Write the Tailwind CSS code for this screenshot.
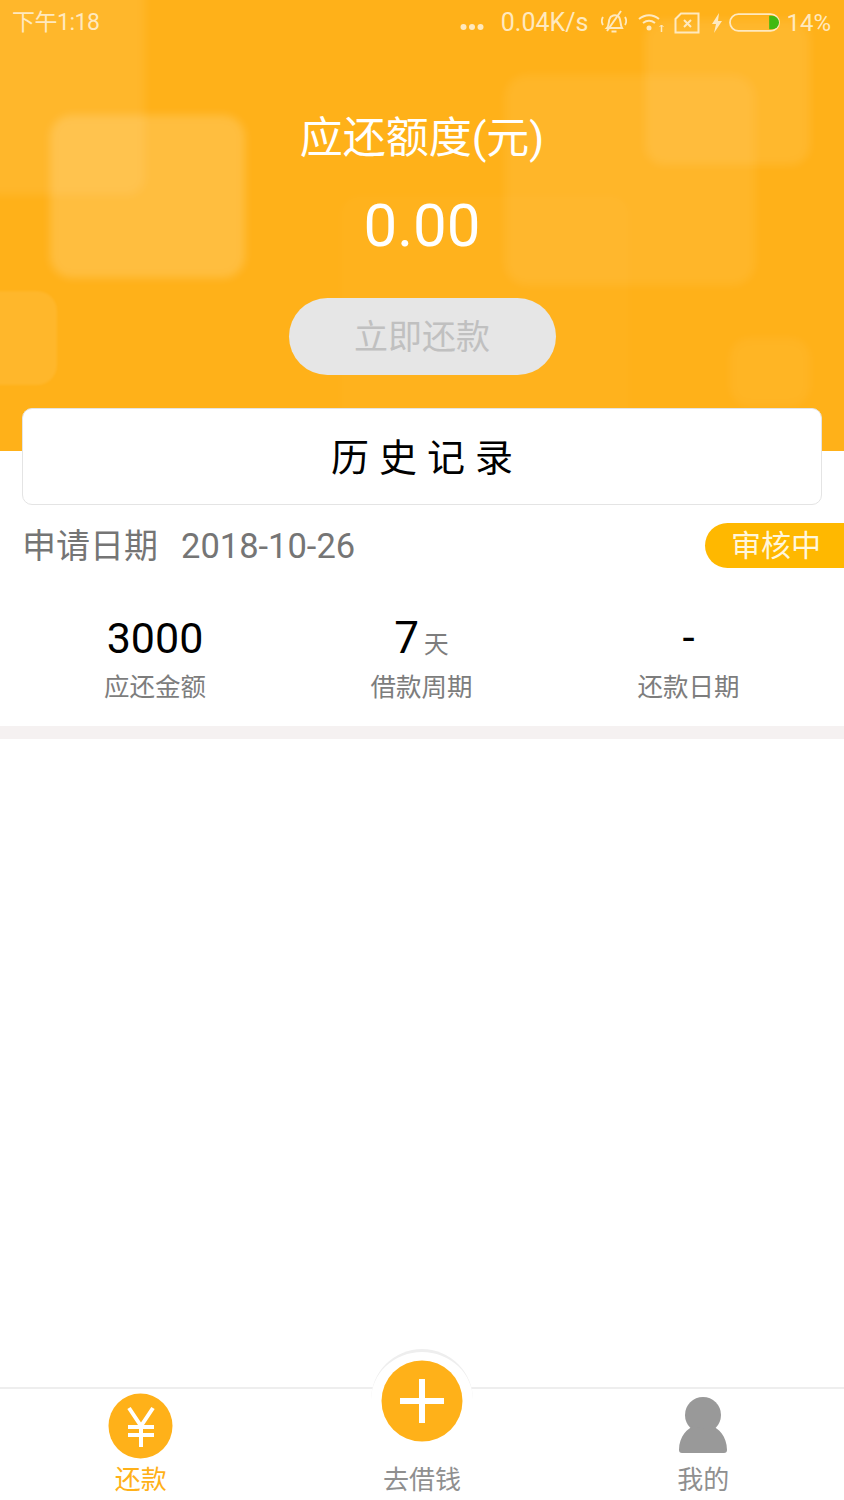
<!DOCTYPE html>
<html lang="zh">
<head>
  <meta charset="UTF-8" />
  <title>还款</title>
  <script src="https://cdn.jsdelivr.net/npm/@tailwindcss/browser@4"></script>
</head>
<body class="bg-white font-['Roboto','Noto_Sans_CJK_SC',sans-serif]">
  <div class="relative w-[844px] h-[1500px] overflow-hidden flex flex-col">

    <!-- header -->
    <div class="relative h-[451px] shrink-0 bg-[#ffb119] overflow-hidden">
      <!-- blurred background squares -->
      <div class="absolute left-[-20px] top-[-20px] w-[165px] h-[215px] rounded-[18px] bg-white/8 blur-[4px]"></div>
      <div class="absolute left-[50px] top-[115px] w-[195px] h-[163px] rounded-[22px] bg-white/17 blur-[4px]"></div>
      <div class="absolute left-[-30px] top-[291px] w-[87px] h-[94px] rounded-[20px] bg-white/8 blur-[1px]"></div>
      <div class="absolute left-[505px] top-[75px] w-[250px] h-[210px] rounded-[22px] bg-white/7 blur-[4px]"></div>
      <div class="absolute left-[645px] top-[20px] w-[165px] h-[145px] rounded-[20px] bg-white/9 blur-[4px]"></div>
      <div class="absolute left-[340px] top-[195px] w-[290px] h-[280px] rounded-[20px] bg-white/2 blur-[3px]"></div>
      <div class="absolute left-[730px] top-[338px] w-[80px] h-[68px] rounded-[20px] bg-white/5 blur-[4px]"></div>

      <!-- status bar -->
      <div class="relative h-[45px] pl-[12px] pr-[13px] flex items-center justify-between text-[#ffe9bf] text-[23px]">
        <span class="mt-[1px] tracking-[-0.5px]">下午1:18</span>
        <div class="flex items-center">
          <svg class="w-[24px] h-[8px] mt-[9px]" viewBox="0 0 24 8" fill="#ffe9bf"><circle cx="3.5" cy="4" r="3"/><circle cx="12" cy="4" r="3"/><circle cx="20.5" cy="4" r="3"/></svg>
          <span class="ml-[17px] text-[25px] leading-[30px]">0.04K/s</span>
          <svg class="ml-[13px] w-[26px] h-[25px]" viewBox="0 0 26 25" fill="none" stroke="#ffe9bf" stroke-width="2"><path d="M6 18c2-2 1.500-6 2.500-9 1-3.500 6-5 9-2.500 2.500 2 1.500 8 3.500 11.500z"/><path d="M10.500 21.500h5"/><path d="M20 1L6 21"/><path d="M2 7c-1.500 2.500-1.500 5.500 0 8M24 7c1.500 2.500 1.500 5.500 0 8" stroke-width="1.800"/></svg>
          <svg class="ml-[11px] w-[26px] h-[20px]" viewBox="0 0 26 20" fill="none" stroke="#ffe9bf" stroke-width="2"><path d="M1 6c6-5 14-5 20 0"/><path d="M5 10c4-3 8-3 12 0"/><circle cx="11" cy="15" r="2.500" fill="#ffe9bf" stroke="none"/><path d="M23.500 12v7" stroke-width="1.500"/><path d="M21.500 14l2-2 2 2" stroke-width="1"/></svg>
          <svg class="ml-[10px] w-[26px] h-[22px]" viewBox="0 0 26 22" fill="none" stroke="#ffe9bf" stroke-width="2"><path d="M1.500 20.500V7l5.500-5.500h17.500v19z"/><path d="M9 7l7 7M16 7l-7 7" transform="translate(1 1)"/></svg>
          <svg class="ml-[11px] w-[12px] h-[20px]" viewBox="0 0 12 20" fill="#ffe9bf"><path d="M8 0L1 11h4l-2 9 8-12H7z"/></svg>
          <svg class="ml-[6px] w-[51px] h-[21px]" viewBox="0 0 52 21" fill="none"><rect x="1" y="2" width="50" height="17" rx="8.500" stroke="#ffe9bf" stroke-width="1.800"/><path d="M41 3.500h3a7 7 0 0 1 0 14h-3z" fill="#3fb911"/></svg>
          <span class="ml-[6px] text-[24px]">14%</span>
        </div>
      </div>

      <!-- balance -->
      <div class="relative flex flex-col items-center">
        <div class="mt-[65px] h-[56px] leading-[56px] text-[43px] text-white">应还额度(元)</div>
        <div class="mt-[28px] h-[64px] leading-[64px] text-[60px] text-white">0.00</div>
        <div class="mt-[40px] w-[267px] h-[77px] rounded-full bg-[#e6e6e6] flex items-center justify-center pt-[2px] text-[34px] text-[#c0c0c0]">立即还款</div>
      </div>
    </div>

    <!-- history button, sits across the header edge -->
    <div class="absolute left-[22px] top-[408px] w-[800px] h-[97px] rounded-[10px] bg-white border border-[#e4e4e4] flex items-center justify-center pt-[3px] pl-[10px] text-[38px] text-black tracking-[10px]">历史记录</div>

    <!-- record -->
    <div class="mt-[55px] h-[220px] shrink-0 flex flex-col">
      <div class="h-[80px] pl-[22px] flex items-center justify-between">
        <div class="flex items-center text-[34px] text-[#757575]">
          <span>申请日期</span>
          <span class="ml-[23px] mt-[1px] text-[34.500px]">2018-10-26</span>
        </div>
        <div class="mb-[1px] w-[139px] h-[45px] pl-[26px] rounded-l-full bg-[#ffb800] flex items-center text-[30px] text-[#fff6dc]">审核中</div>
      </div>
      <div class="mt-[21px] grid grid-cols-[310px_223px_311px] text-center">
        <div class="flex flex-col items-center">
          <div class="h-[62px] leading-[62px] text-[43px] text-black">3000</div>
          <div class="h-[36px] leading-[36px] text-[25.500px] text-[#7d7d7d]">应还金额</div>
        </div>
        <div class="flex flex-col items-center">
          <div class="h-[62px] leading-[62px] text-black"><span class="text-[44px]">7</span><span class="ml-[5px] text-[25px] text-[#7d7d7d]">天</span></div>
          <div class="h-[36px] leading-[36px] text-[25.500px] text-[#7d7d7d]">借款周期</div>
        </div>
        <div class="flex flex-col items-center">
          <div class="h-[62px] leading-[62px] text-[44px] text-black">-</div>
          <div class="h-[36px] leading-[36px] text-[25.500px] text-[#7d7d7d]">还款日期</div>
        </div>
      </div>
    </div>
    <div class="h-[13px] shrink-0 bg-[#f5f1f1]"></div>

    <div class="flex-1"></div>

    <!-- tab bar -->
    <div class="relative h-[113px] shrink-0 border-t-2 border-[#eeeeee] grid grid-cols-3 bg-white">
      <div class="flex flex-col items-center">
        <svg class="mt-[4px] ml-[-1px] w-[65px] h-[66px]" viewBox="0 0 65 66"><ellipse cx="32.500" cy="33" rx="32" ry="32.500" fill="#ffb119"/><path d="M21 15l12 18 12-18M33 33v21M20 34h26M20 42h26" fill="none" stroke="#fff" stroke-width="4"/></svg>
        <span class="mt-[4px] text-[26px] leading-[34px] text-[#ffb119]">还款</span>
      </div>
      <div class="flex flex-col items-center justify-end">
        <span class="mb-[3px] text-[26px] leading-[34px] text-[#8f8f8f]">去借钱</span>
      </div>
      <div class="flex flex-col items-center">
        <svg class="mt-[8px] w-[50px] h-[57px]" viewBox="0 0 50 57" fill="#999999"><ellipse cx="25" cy="18" rx="18" ry="18"/><path d="M1 53c0-14 9-22 15-24 5 3 13 3 18 0 6 2 15 10 15 24 0 2-1 3-3 3H4c-2 0-3-1-3-3z"/></svg>
        <span class="mt-[9px] text-[26px] leading-[34px] text-[#8f8f8f]">我的</span>
      </div>

      <!-- raised plus button -->
      <div class="absolute left-[371px] top-[-40px] w-[102px] h-[102px] rounded-full bg-white border-t-[3px] border-[#eeeeee] flex justify-center">
        <svg class="mt-[8px] w-[82px] h-[82px]" viewBox="0 0 82 82"><circle cx="41" cy="41" r="40.500" fill="#ffb119"/><path d="M41 19v44M19 41h44" fill="none" stroke="#fff" stroke-width="6"/></svg>
      </div>
    </div>
  </div>
</body>
</html>
